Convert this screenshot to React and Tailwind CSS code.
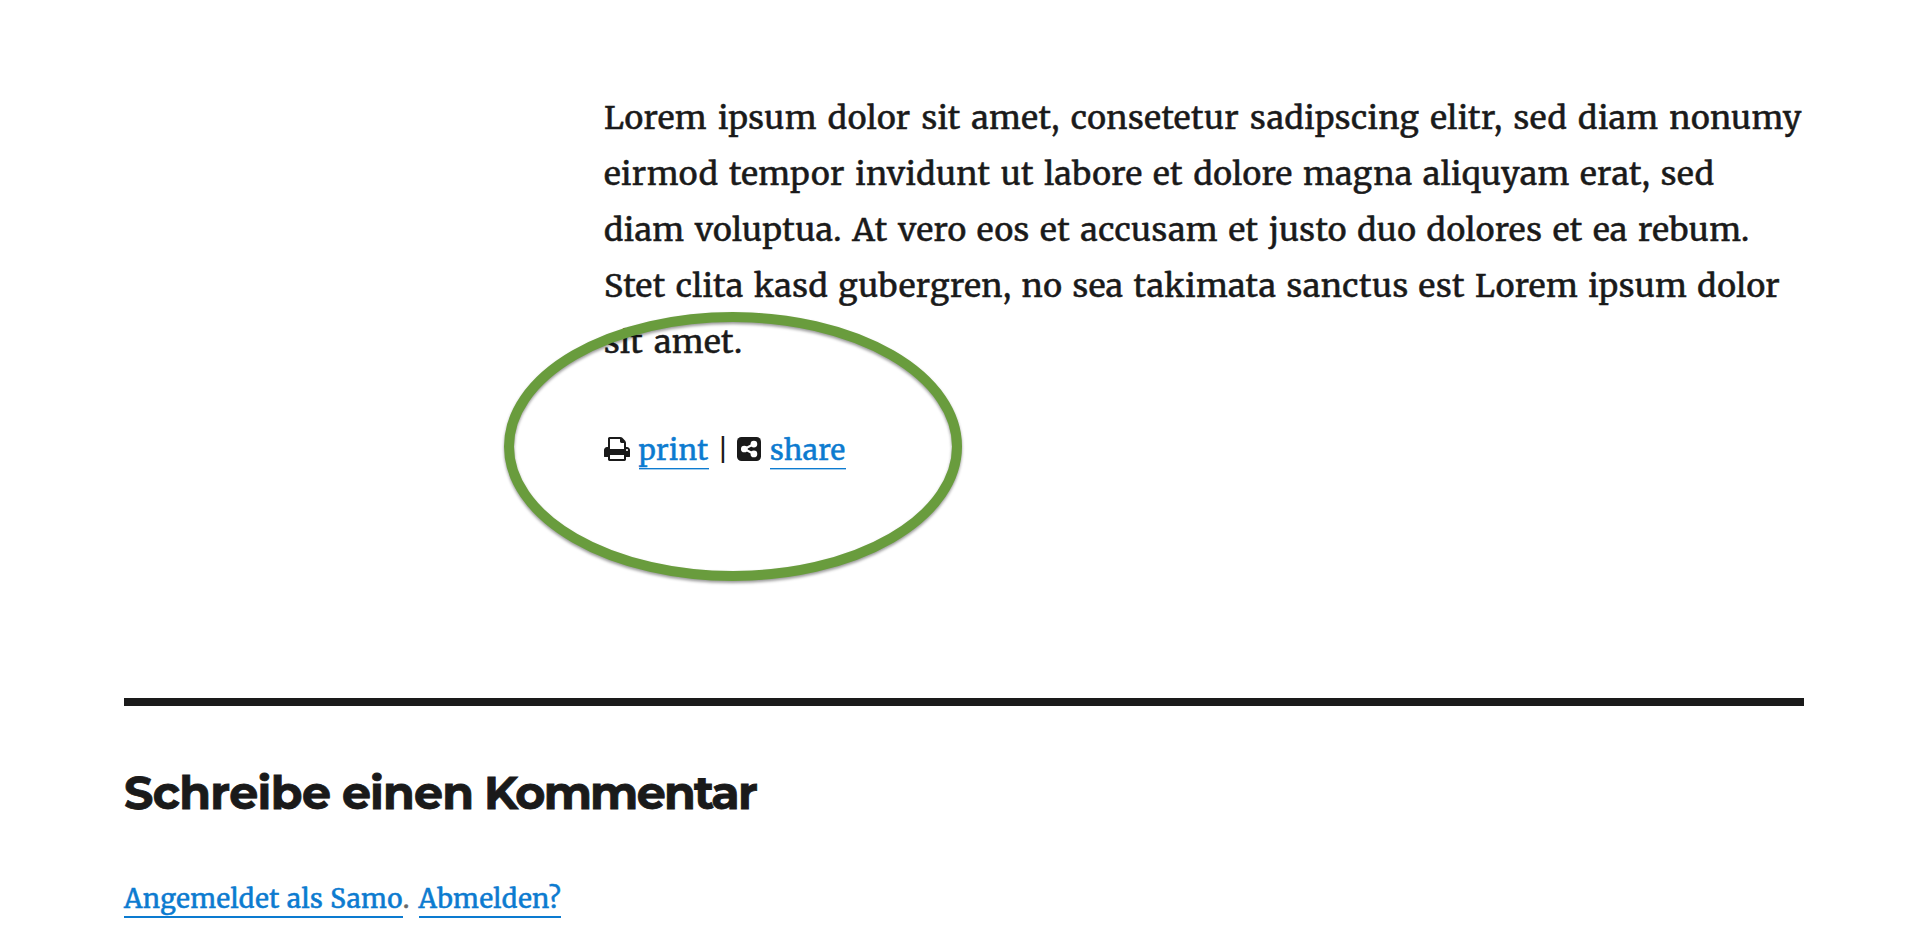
function PrintIcon() {
  return (
    <svg className="-mt-[3px] h-6 w-[26px]" viewBox="64 128 1664 1536" fill="currentColor" preserveAspectRatio="none" aria-hidden="true">
      <path d="M448 1536h896v-256h-896v256zm0-640h896v-384h-160q-40 0-68-28t-28-68v-160h-640v640zm1152 64q0-26-19-45t-45-19-45 19-19 45 19 45 45 19 45-19 19-45zm128 0v416q0 13-9.500 22.500t-22.500 9.500h-224v160q0 40-28 68t-68 28h-960q-40 0-68-28t-28-68v-160h-224q-13 0-22.500-9.500t-9.500-22.500v-416q0-79 56.500-135.500t135.500-56.500h64v-544q0-40 28-68t68-28h672q40 0 88 20t76 48l152 152q28 28 48 76t20 88v256h64q79 0 135.500 56.500t56.500 135.500z" />
    </svg>
  );
}

function ShareIcon() {
  return (
    <svg className="-mt-[3px] ml-[7.500px] size-6" viewBox="0 0 24 24" aria-hidden="true">
      <rect width="24" height="24" rx="4.5" fill="currentColor" />
      <path d="M17 7 7.300 12l9.700 5" fill="none" stroke="#fff" strokeWidth="2.200" />
      <g fill="#fff">
        <circle cx="7.300" cy="12" r="3.350" />
        <circle cx="16.900" cy="7.100" r="3.350" />
        <circle cx="16.900" cy="16.900" r="3.350" />
      </g>
    </svg>
  );
}

const LINK = "text-[#0c7bd0] border-[#0c7bd0]";

export default function App() {
  return (
    <main className="relative h-[948px] w-[1930px] overflow-hidden bg-white pt-[90px] pl-[124px] font-[Merriweather,'DejaVu_Serif',serif] text-[#1a1a1a] [-webkit-text-stroke:0.5px_currentColor]">
      <article className="pl-[480px]">
        <p className="text-[32px] leading-[56px] tracking-[0.45px] whitespace-nowrap">
          <span className="block [word-spacing:2.850px]">Lorem ipsum dolor sit amet, consetetur sadipscing elitr, sed diam nonumy</span>
          <span className="block [word-spacing:2.350px]">eirmod tempor invidunt ut labore et dolore magna aliquyam erat, sed</span>
          <span className="block [word-spacing:2.300px]">diam voluptua. At vero eos et accusam et justo duo dolores et ea rebum.</span>
          <span className="block [word-spacing:2.050px]">Stet clita kasd gubergren, no sea takimata sanctus est Lorem ipsum dolor</span>
          <span className="block [word-spacing:3px]">sit amet.</span>
        </p>
        <div className="mt-14 flex h-[49px] items-center text-[28px] leading-[49px] tracking-[0.45px]">
          <PrintIcon />
          <span className="ml-[8.500px]"><a className={`border-b shadow-[0_1px_0_#a5cdec] ${LINK}`}>print</a></span>
          <span className="ml-[8.500px] w-[12px] [-webkit-text-stroke:0px]">|</span>
          <ShareIcon />
          <span className="ml-[9.500px]"><a className={`border-b shadow-[0_1px_0_#a5cdec] ${LINK}`}>share</a></span>
        </div>
      </article>
      <section className="mt-[223px] w-[1680px] border-t-8 border-[#1a1a1a] pt-[59px]">
        <h2 className="flex font-[Montserrat,Inter,sans-serif] text-[46px] leading-[56px] font-bold [-webkit-text-stroke:0.8px_currentColor]">
          <span className="mr-[11.500px] tracking-[-0.600px]">Schreibe</span>
          <span className="mr-[11px] tracking-[-0.900px]">einen</span>
          <span className="tracking-[-1.800px]">Kommentar</span>
        </h2>
        <p className="mt-[57px] text-[26px] leading-[42px] tracking-[0.45px] text-[#686868]">
          <a className={`border-b-2 pb-px [word-spacing:0.500px] ${LINK}`}>Angemeldet als Samo</a>
          <span className="mr-[2px]">.</span> <a className={`border-b-2 pb-px ${LINK}`}>Abmelden?</a>
        </p>
      </section>
      <svg className="pointer-events-none absolute top-[300px] left-[490px] h-[300px] w-[490px] overflow-visible drop-shadow-[0_2px_1.500px_rgba(0,0,0,0.4)]" viewBox="490 300 490 300" aria-hidden="true">
        <ellipse cx="733" cy="446.500" rx="224" ry="129.500" fill="none" stroke="#699c3d" strokeWidth="10" />
      </svg>
    </main>
  );
}
